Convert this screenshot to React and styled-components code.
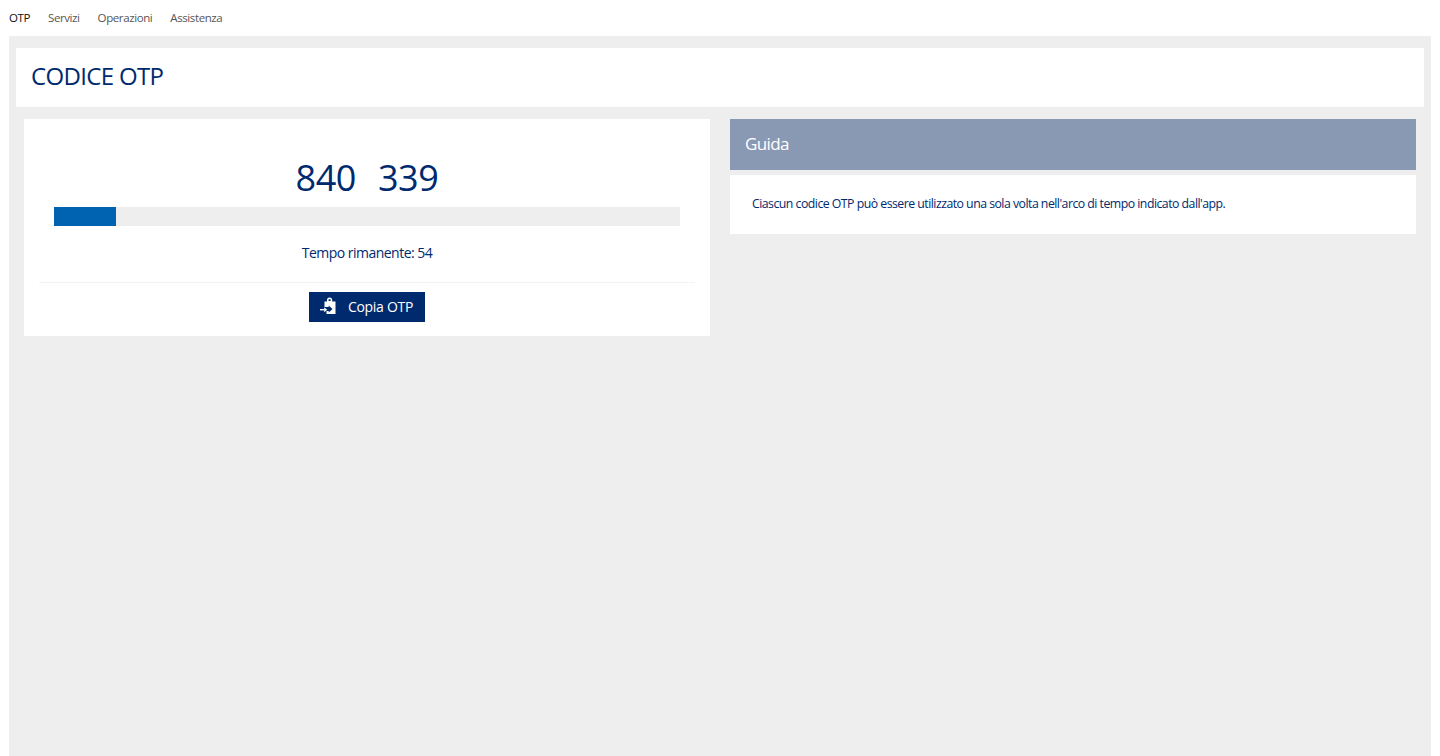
import React from "react";
import styled, { createGlobalStyle } from "styled-components";

const Global = createGlobalStyle`
  html, body { margin: 0; padding: 0; background: #fff; height: 100%; overflow: hidden; }
  body { font-family: "Open Sans", "Noto Sans", "Liberation Sans", sans-serif; }
`;
const Page = styled.div`
  width: 1440px; height: 756px; display: flex; flex-direction: column; overflow: hidden;
`;
const Nav = styled.nav`
  height: 36px; flex: none; display: flex; align-items: center; gap: 18px; padding: 0 0 1px 9px; box-sizing: border-box;
`;
const NavItem = styled.a`
  font-size: 11.5px; letter-spacing: -0.4px; color: ${p => (p.$active ? "#111" : "#555")};
`;
const Main = styled.main`
  flex: 1; margin: 0 9px; background: #eee; padding: 12px 7px 0;
`;
const TitleBar = styled.header`
  height: 59px; background: #fff; display: flex; align-items: center; padding: 0 0 5px 15px; box-sizing: border-box;
`;
const Title = styled.h1`
  margin: 0; font-size: 24px; font-weight: 400; letter-spacing: -0.67px; color: #002a6e;
`;
const Columns = styled.div`
  display: grid; grid-template-columns: 686px 686px; gap: 20px; padding: 12px 8px 0; align-items: start;
`;
const Card = styled.section`
  background: #fff; height: 217px; display: flex; flex-direction: column; align-items: center;
`;
const Code = styled.div`
  margin-top: 35px; height: 47px; line-height: 47px; font-size: 36px; letter-spacing: -0.4px;
  color: #002a6e; white-space: pre; word-spacing: 2px;
`;
const Track = styled.div`
  margin-top: 6px; width: 626px; height: 19px; background: #eee; flex: none;
`;
const Fill = styled.div`
  height: 100%; background: #0063b1;
`;
const Remaining = styled.p`
  margin: 17px 0 0; height: 20px; line-height: 20px; font-size: 14px; letter-spacing: -0.52px; color: #002a6e;
`;
const Divider = styled.hr`
  margin: 19px 0 0; width: 656px; height: 1px; border: 0; background: #f3f3f3; flex: none;
`;
const Button = styled.button`
  margin-top: 9px; width: 116px; height: 30px; border: 0; padding: 0 1px 2px 0; background: #002a6e; color: #fff;
  display: flex; align-items: center; justify-content: center; gap: 11px;
  font-family: inherit; font-size: 14px; letter-spacing: -0.3px;
`;
const Side = styled.section`
  display: flex; flex-direction: column; gap: 5px;
`;
const GuideHead = styled.div`
  height: 51px; background: #8a99b3; color: #fff; display: flex; align-items: center; padding: 0 0 2px 15px; box-sizing: border-box;
  font-size: 17px; letter-spacing: -0.6px;
`;
const GuideBody = styled.div`
  height: 59px; background: #fff; display: flex; align-items: center; padding: 0 0 2px 22px; box-sizing: border-box;
  font-size: 12.3px; letter-spacing: -0.52px; color: #002a6e;
`;

const ClipIcon = () => (
  <svg width="17" height="18" viewBox="0 0 17 18" aria-hidden="true">
    <path fill="#fff" d="M4.5 4.5H7V3a2.6 2.6 0 0 1 5.2 0v1.5h3.3V17H6.5v-3h2.2v1.6L12.5 12 8.7 8.4V10H4.5z" />
    <path fill="#002a6e" d="M8.6 2.2h2v1.8h-2z" />
    <path fill="#fff" d="M0 12h4.2v1.4H0z" />
    <path fill="#fff" d="M4.2 10.2l3 2.5-3 2.5z" />
  </svg>
);

export default function App() {
  return (
    <Page>
      <Global />
      <Nav>
        <NavItem $active>OTP</NavItem>
        <NavItem>Servizi</NavItem>
        <NavItem>Operazioni</NavItem>
        <NavItem>Assistenza</NavItem>
      </Nav>
      <Main>
        <TitleBar><Title>CODICE OTP</Title></TitleBar>
        <Columns>
          <Card>
            <Code>840  339</Code>
            <Track><Fill style={{ width: `${(62 / 626) * 100}%` }} /></Track>
            <Remaining>Tempo rimanente: 54</Remaining>
            <Divider />
            <Button><ClipIcon />Copia OTP</Button>
          </Card>
          <Side>
            <GuideHead>Guida</GuideHead>
            <GuideBody>Ciascun codice OTP può essere utilizzato una sola volta nell'arco di tempo indicato dall'app.</GuideBody>
          </Side>
        </Columns>
      </Main>
    </Page>
  );
}
